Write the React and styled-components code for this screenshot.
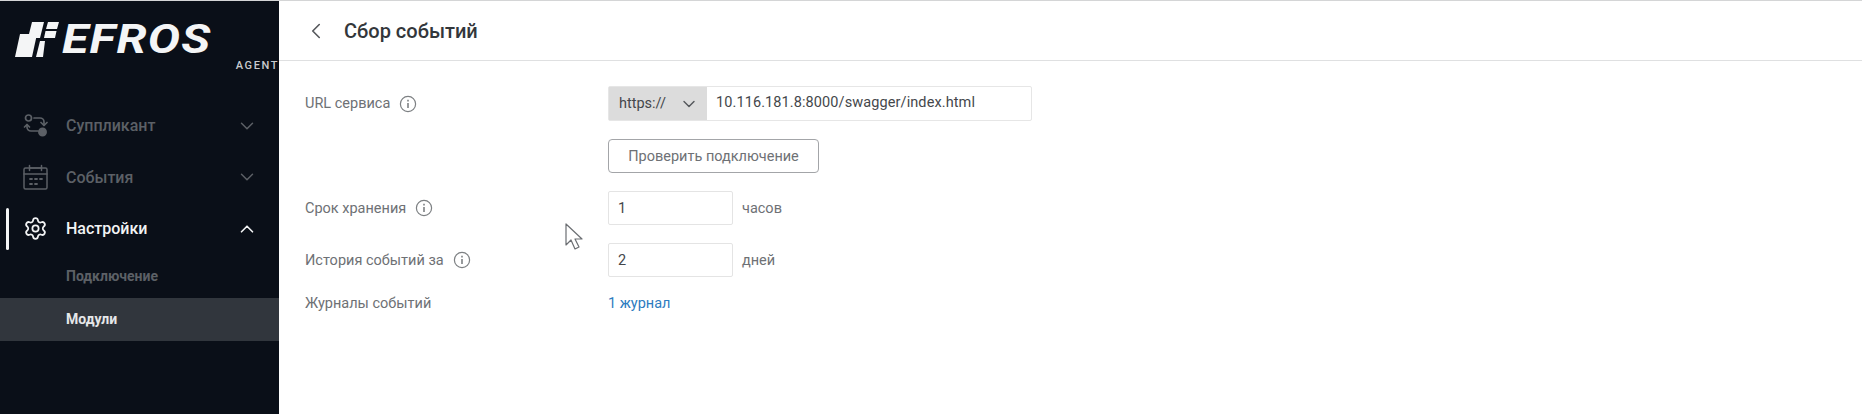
import React from 'react';
import styled, { createGlobalStyle } from 'styled-components';
import { ChevronDown, ChevronLeft, ChevronUp, Settings } from 'lucide-react';

const GlobalStyle = createGlobalStyle`
  html, body {
    margin: 0;
    padding: 0;
    background: #fff;
  }
  body {
    font-family: Roboto, "Noto Sans", sans-serif;
  }
`;

const Page = styled.div`
  position: relative;
  display: flex;
  width: 1862px;
  height: 414px;
  overflow: hidden;
  border-top: 1px solid #d4d5d6;
  box-sizing: border-box;
`;

const Sidebar = styled.aside`
  width: 279px;
  flex: none;
  background: #0a0f18;
  display: flex;
  flex-direction: column;
`;

const Logo = styled.div`
  height: 99px;
  padding: 21px 0 0 15px;
  box-sizing: border-box;
  display: flex;
  flex-direction: column;
  align-items: flex-start;
`;

const LogoRow = styled.div`
  display: flex;
  align-items: center;
  gap: 3px;
  height: 35px;
`;

const LogoWord = styled.span`
  font-family: Roboto, sans-serif;
  font-size: 41px;
  line-height: 35px;
  font-weight: 700;
  font-style: italic;
  letter-spacing: 1px;
  color: #f4f5f6;
  transform: scaleX(1.18);
  transform-origin: left center;
`;

const LogoSub = styled.span`
  align-self: flex-end;
  margin: 2px 0 0 146px;
  font-size: 11px;
  line-height: 13px;
  font-weight: 500;
  letter-spacing: 1.6px;
  color: #c9cbce;
`;

const NavItem = styled.div`
  position: relative;
  height: 51.5px;
  display: flex;
  align-items: center;
  padding: 0 21px 0 23px;
  gap: 18px;
  color: ${props => (props.$active ? '#f2f3f4' : '#5c6066')};
  font-size: 16px;
  font-weight: 500;
`;

const ActiveBar = styled.span`
  position: absolute;
  left: 6px;
  top: 5px;
  width: 3px;
  height: 42px;
  border-radius: 2px;
  background: #f4f5f6;
`;

const NavIcon = styled.span`
  width: 25px;
  height: 25px;
  flex: none;
  display: flex;
  align-items: center;
  justify-content: center;
`;

const NavLabel = styled.span`
  flex: 1;
`;

const SubItem = styled.div`
  height: 43px;
  display: flex;
  align-items: center;
  padding-left: 66px;
  font-size: 14px;
  font-weight: 700;
  color: ${props => (props.$active ? '#e6e7e9' : '#5c6066')};
  background: ${props => (props.$active ? '#31363d' : 'transparent')};
`;

const Main = styled.main`
  flex: 1;
  display: flex;
  flex-direction: column;
`;

const Header = styled.header`
  height: 60px;
  box-sizing: border-box;
  flex: none;
  display: flex;
  align-items: center;
  padding-left: 24px;
  gap: 15px;
  border-bottom: 1px solid #dfe0e1;
`;

const Title = styled.h1`
  margin: 0;
  font-size: 20px;
  font-weight: 500;
  color: #33373b;
`;

const Form = styled.div`
  padding: 25px 0 0 26px;
  display: grid;
  grid-template-columns: 303px 1fr;
  align-items: center;
  row-gap: 18px;
`;

const Label = styled.div`
  display: flex;
  align-items: center;
  gap: 9px;
  font-size: 14.5px;
  color: #6e7175;
`;

const Field = styled.div`
  display: flex;
  align-items: center;
  gap: 9px;
  font-size: 14.5px;
  color: #6e7175;
`;

const UrlGroup = styled.div`
  width: 424px;
  height: 35px;
  display: flex;
  box-sizing: border-box;
  border: 1px solid #e6e6e6;
  border-radius: 2px;
`;

const Scheme = styled.div`
  width: 98px;
  flex: none;
  display: flex;
  align-items: center;
  gap: 13px;
  padding-left: 10px;
  box-sizing: border-box;
  background: #dcdcdc;
  font-size: 14.5px;
  color: #44474b;
`;

const UrlValue = styled.div`
  flex: 1;
  padding: 0 9px;
  display: flex;
  align-items: center;
  margin-top: -2px;
  font-size: 14.5px;
  letter-spacing: 0.1px;
  color: #44474b;
`;

const CheckButton = styled.button`
  width: 211px;
  height: 34px;
  padding: 0;
  background: #fff;
  border: 1px solid #a3a5a8;
  border-radius: 4px;
  font-family: inherit;
  font-size: 14.5px;
  color: #6e7175;
`;

const NumberBox = styled.div`
  width: 125px;
  height: 34px;
  box-sizing: border-box;
  display: flex;
  align-items: center;
  padding-left: 9px;
  border: 1px solid #e4e4e4;
  border-radius: 2px;
  color: #44474b;
  font-size: 14.5px;
`;

const JournalLink = styled.a`
  font-size: 14.5px;
  color: #2d7cc0;
`;

const CursorMark = styled.svg`
  position: absolute;
  left: 565px;
  top: 222px;
`;

const InfoIcon = () => (
  <svg width="18" height="18" viewBox="0 0 18 18" fill="none" stroke="#7d8083" strokeWidth="1.2">
    <circle cx="9" cy="9" r="7.6" />
    <path d="M9 8v5" strokeWidth="1.6" />
    <path d="M9 4.8v1.6" strokeWidth="1.6" />
  </svg>
);

const SupplicantIcon = () => (
  <svg width="25" height="25" viewBox="0 0 25 25" fill="none" stroke="#5c6066" strokeWidth="1.7" strokeLinecap="round" strokeLinejoin="round">
    <circle cx="5.5" cy="5" r="3" />
    <path d="M11 5h6a4 4 0 0 1 4 4v3" />
    <path d="M18 9.5l3 3 3-3" />
    <path d="M15 18H8a4 4 0 0 1-4-4v-2" />
    <path d="M7 10.5l-3-1.5" opacity="0" />
    <path d="M1.5 14l2.5-2.5 2.5 2.5" />
    <circle cx="19.5" cy="19" r="3.6" fill="#5c6066" />
  </svg>
);

const CalendarIcon = () => (
  <svg width="25" height="26" viewBox="0 0 25 26" fill="none" stroke="#5c6066" strokeWidth="1.5" strokeLinecap="round">
    <rect x="1" y="4" width="23" height="21" rx="1.5" />
    <path d="M1 10h23M6.5 1.5v5M18.5 1.5v5M6.5 4h12" />
    <path d="M7 15h2M12 15h2M17 15h2M7 20h2M12 20h2" strokeWidth="1.8" />
  </svg>
);

const LogoMark = () => (
  <svg width="44" height="35" viewBox="0 0 44 35" fill="#f4f5f6">
    <polygon points="17,0 29,0 25,16 13,16" transform="translate(0,0)" />
    <polygon points="33,0 44,0 42,7 31,7" />
    <polygon points="30.5,9 41.5,9 40,16 29,16" />
    <polygon points="5,12 22,12 17,35 0,35" />
    <polygon points="25,19 30,19 28,35 21,35" />
  </svg>
);

const Cursor = () => (
  <CursorMark width="19" height="28" viewBox="0 0 19 28" fill="#fff" stroke="#6b6e72" strokeWidth="1.2" strokeLinejoin="round">
    <path d="M1 1v21l5-5 4 9 4-2-4-8h7z" />
  </CursorMark>
);

const App = () => (
  <Page>
    <GlobalStyle />
    <Sidebar>
      <Logo>
        <LogoRow>
          <LogoMark />
          <LogoWord>EFROS</LogoWord>
        </LogoRow>
        <LogoSub>AGENT</LogoSub>
      </Logo>
      <NavItem>
        <NavIcon><SupplicantIcon /></NavIcon>
        <NavLabel>Суппликант</NavLabel>
        <ChevronDown size={22} strokeWidth={1.6} />
      </NavItem>
      <NavItem>
        <NavIcon><CalendarIcon /></NavIcon>
        <NavLabel>События</NavLabel>
        <ChevronDown size={22} strokeWidth={1.6} />
      </NavItem>
      <NavItem $active>
        <ActiveBar />
        <NavIcon><Settings size={25} strokeWidth={1.7} /></NavIcon>
        <NavLabel>Настройки</NavLabel>
        <ChevronUp size={22} strokeWidth={1.8} />
      </NavItem>
      <SubItem>Подключение</SubItem>
      <SubItem $active>Модули</SubItem>
    </Sidebar>
    <Main>
      <Header>
        <ChevronLeft size={26} strokeWidth={1.5} color="#55585c" />
        <Title>Сбор событий</Title>
      </Header>
      <Form>
        <Label>URL сервиса <InfoIcon /></Label>
        <UrlGroup>
          <Scheme>https:// <ChevronDown size={20} strokeWidth={1.7} color="#55585c" /></Scheme>
          <UrlValue>10.116.181.8:8000/swagger/index.html</UrlValue>
        </UrlGroup>
        <span />
        <CheckButton>Проверить подключение</CheckButton>
        <Label>Срок хранения <InfoIcon /></Label>
        <Field><NumberBox>1</NumberBox> часов</Field>
        <Label>История событий за <InfoIcon /></Label>
        <Field><NumberBox>2</NumberBox> дней</Field>
        <Label>Журналы событий</Label>
        <Field><JournalLink>1 журнал</JournalLink></Field>
      </Form>
    </Main>
    <Cursor />
  </Page>
);

export default App;
